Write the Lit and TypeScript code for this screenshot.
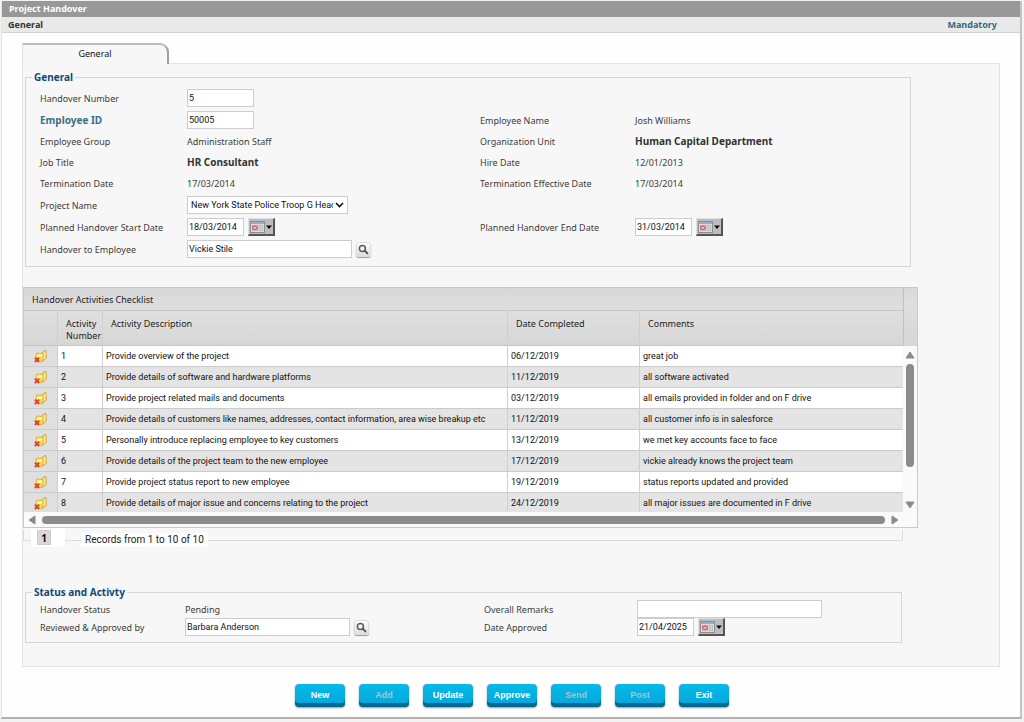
import { LitElement, html, css, svg, nothing } from "lit";
import { customElement, property } from "lit/decorators.js";

interface Activity {
  no: number;
  text: string;
  date: string;
  comment: string;
}

const activities: Activity[] = [
  { no: 1, text: "Provide overview of the project", date: "06/12/2019", comment: "great job" },
  { no: 2, text: "Provide details of software and hardware platforms", date: "11/12/2019", comment: "all software activated" },
  { no: 3, text: "Provide project related mails and documents", date: "03/12/2019", comment: "all emails provided in folder and on F drive" },
  { no: 4, text: "Provide details of customers like names, addresses, contact information, area wise breakup etc", date: "11/12/2019", comment: "all customer info is in salesforce" },
  { no: 5, text: "Personally introduce replacing employee to key customers", date: "13/12/2019", comment: "we met key accounts face to face" },
  { no: 6, text: "Provide details of the project team to the new employee", date: "17/12/2019", comment: "vickie already knows the project team" },
  { no: 7, text: "Provide project status report to new employee", date: "19/12/2019", comment: "status reports updated and provided" },
  { no: 8, text: "Provide details of major issue and concerns relating to the project", date: "24/12/2019", comment: "all major issues are documented in F drive" },
];

const actions = [
  { label: "New", dim: false },
  { label: "Add", dim: true },
  { label: "Update", dim: false },
  { label: "Approve", dim: false },
  { label: "Send", dim: true },
  { label: "Post", dim: true },
  { label: "Exit", dim: false },
];

const dots: number[][] = [];
for (let r = 0; r < 3; r++) for (let c = 0; c < 5; c++) dots.push([3 + c * 2.4, 5 + r * 2.3]);

const calendarIcon = html`<svg width="24" height="14" viewBox="0 0 24 14" aria-hidden="true">
  <rect x="1.5" y="1.5" width="14" height="11" fill="#dcdcdc" stroke="#8d8d8d" stroke-width="1" />
  <rect x="2" y="2" width="13" height="2" fill="#8fb0d0" />
  ${dots.map(([x, y]) => svg`<rect x=${x} y=${y} width="1.4" height="1.3" fill="#a4a7ae" />`)}
  <ellipse cx="6" cy="7.8" rx="2.3" ry="1.7" fill="#f3d0ce" stroke="#e2504c" stroke-width="1.2" />
  <path d="M17 5.5h6L20 9z" fill="#0a0a0a" />
</svg>`;

const lensIcon = html`<svg width="11" height="11" viewBox="0 0 11 11" aria-hidden="true">
  <circle cx="4.4" cy="4.4" r="3" fill="#f5f5f5" stroke="#5c5c5c" stroke-width="1.5" />
  <path d="M6.8 6.8L9.4 9.4" stroke="#555" stroke-width="2" stroke-linecap="round" />
</svg>`;

const folderIcon = html`<svg width="13" height="13" viewBox="0 0 13 13" aria-hidden="true">
  <path d="M7.6 3L8.2 2.4L9.4 2.2L9.8 1L12 .6L12.3 8.2L8 11.4z" fill="#fae98c" stroke="#c48a1c" stroke-width=".7" />
  <path d="M2 4.4L2.6 3.2L4.8 2.8L5.6 3.6L8.6 3L9.4 4.2L8.8 10.6L7.4 11.8L2.6 10z" fill="#f6d84e" stroke="#cf9a26" stroke-width=".6" />
  <path d="M3 4.8L8.2 4.2L8 6.6L3.2 7.2z" fill="#fff7b4" />
  <path d="M.9 7.6L5.1 12M5.1 7.6L.9 12" stroke="#e0402a" stroke-width="2" />
</svg>`;

@customElement("date-field")
class DateField extends LitElement {
  @property() label = "";
  @property() value = "";

  static styles = css`
    :host { display: flex; align-items: center; gap: 4px; }
    .date {
      box-sizing: border-box; width: 57px; height: 18px; margin: 0; padding: 0 1px;
      border: 1px solid #ccc; background: #fff; color: #111;
      font: 9px Roboto, sans-serif; outline: none;
    }
    .pick {
      display: grid; place-items: center; width: 27px; height: 18px; margin: 0; padding: 0; box-sizing: border-box;
      border: 1px solid; border-color: #e0e0e0 #555 #555 #e0e0e0; border-right-width: 2px; border-bottom-width: 2px;
      background: #bdbdbd;
    }
  `;

  render() {
    return html`
      <input class="date" type="text" aria-label=${this.label} .value=${this.value} />
      <button class="pick" type="button" aria-label="Pick date">${calendarIcon}</button>
    `;
  }
}

@customElement("lookup-field")
class LookupField extends LitElement {
  @property() label = "";
  @property() value = "";

  static styles = css`
    :host { display: flex; align-items: center; gap: 4px; }
    .person {
      box-sizing: border-box; width: 165px; height: 18px; margin: 0; padding: 0 1px;
      border: 1px solid #ccc; background: #fff; color: #111;
      font: 9px Roboto, sans-serif; outline: none;
    }
    .find {
      display: grid; place-items: center; box-sizing: border-box; width: 15px; height: 15px; margin: 0; padding: 0;
      border: 1px solid #ddd; border-radius: 3px; box-shadow: 0 1px 1px #999;
      background: linear-gradient(#fff, #ddd);
    }
  `;

  render() {
    return html`
      <input class="person" type="text" aria-label=${this.label} .value=${this.value} />
      <button class="find" type="button" aria-label="Search">${lensIcon}</button>
    `;
  }
}

@customElement("activity-grid")
class ActivityGrid extends LitElement {
  static styles = css`
    :host {
      display: grid; grid-template-columns: minmax(0, 1fr) 14px; grid-template-rows: 58px minmax(0, 1fr) 15px;
      border: 1px solid #c9c9c9; background: #fafafa;
      font: 9px/12px "Noto Sans", sans-serif; color: #111;
    }
    .view { grid-row: 1 / 3; height: 224px; overflow: hidden; }
    .corner { background: linear-gradient(#d9d9d9, #dfdfdf 30%, #d6d6d6); border-left: 1px solid #c0c0c0; }
    table { width: 100%; border-collapse: separate; border-spacing: 0; table-layout: fixed; }
    caption {
      box-sizing: border-box; height: 23px; padding: 0 8px; text-align: left; line-height: 24px;
      background: linear-gradient(#d8d8d8, #dedede); border-bottom: 1px solid #c6c6c6; color: #222;
    }
    th {
      box-sizing: border-box; height: 35px; padding: 7px 0 0 8px; vertical-align: top; text-align: left;
      font-weight: 400; line-height: 12px; color: #222;
      background: linear-gradient(#e0e0e0, #d6d6d6); border-bottom: 1px solid #c6c6c6;
    }
    th + th, td + td { border-left: 1px solid #cfcfcf; }
    td {
      box-sizing: border-box; height: 21px; padding: 0 3px; border-bottom: 1px solid #cbcbcb; background: #fff;
      font-family: Roboto, sans-serif; white-space: nowrap;
    }
    .even td { background: #e4e4e4; }
    .icon, .even .icon { background: #dfdfdf; text-align: center; padding: 0; }
    .icon svg { display: block; margin: 0 auto; }
    .c-icon { width: 33px; }
    .c-no { width: 45px; }
    .c-date { width: 132px; }
    .c-note { width: 264px; }
    .vbar { display: flex; flex-direction: column; align-items: center; padding: 5px 0 3px; gap: 5px; }
    .vtrack { flex: 1; }
    .vthumb { width: 8px; height: 103px; border-radius: 4px; background: #8b8b8b; }
    .hbar { display: flex; align-items: center; gap: 6px; padding: 0 4px; }
    .hthumb { flex: 1; height: 8px; border-radius: 4px; background: #8b8b8b; }
    .arrow { display: block; fill: #8b8b8b; stroke: #8b8b8b; stroke-width: 1; stroke-linejoin: round; }
  `;

  render() {
    return html`
      <div class="view">
        <table>
          <caption>Handover Activities Checklist</caption>
          <colgroup>
            <col class="c-icon" /><col class="c-no" /><col /><col class="c-date" /><col class="c-note" />
          </colgroup>
          <thead>
            <tr>
              <th aria-label="Delete"></th>
              <th scope="col">Activity Number</th>
              <th scope="col">Activity Description</th>
              <th scope="col">Date Completed</th>
              <th scope="col">Comments</th>
            </tr>
          </thead>
          <tbody>
            ${activities.map(
              (a) => html`<tr class=${a.no % 2 ? nothing : "even"}>
                <td class="icon">${folderIcon}</td>
                <td>${a.no}</td>
                <td>${a.text}</td>
                <td>${a.date}</td>
                <td>${a.comment}</td>
              </tr>`
            )}
          </tbody>
        </table>
      </div>
      <div class="corner"></div>
      <div class="vbar">
        <svg class="arrow" width="10" height="8" viewBox="0 0 10 8"><path d="M5 1L9 7H1z" /></svg>
        <div class="vtrack"><div class="vthumb"></div></div>
        <svg class="arrow" width="10" height="8" viewBox="0 0 10 8"><path d="M5 7L9 1H1z" /></svg>
      </div>
      <div class="hbar">
        <svg class="arrow" width="8" height="10" viewBox="0 0 8 10"><path d="M1 5L7 1V9z" /></svg>
        <div class="hthumb"></div>
        <svg class="arrow" width="8" height="10" viewBox="0 0 8 10"><path d="M7 5L1 1V9z" /></svg>
      </div>
    `;
  }
}

@customElement("app-root")
class AppRoot extends LitElement {
  static styles = css`
    :host {
      display: block; box-sizing: border-box; min-height: 100vh; padding: 1px 2px 3px 1px; background: #f3f3f3;
      font: 9px/17px "Noto Sans", sans-serif; color: #3c3c3c;
    }
    .window { background: #fefefe; border-left: 1px solid #e6e6e6; border-right: 2px solid #c4c4c4; border-bottom: 2px solid #b0b0b0; }
    .title { margin: 0; padding: 0 7px; background: #989898; color: #fff; font: bold 9px/16px "Noto Sans", sans-serif; }
    .bar {
      display: flex; justify-content: space-between; padding: 0 23px 0 6px; background: #e9e9e9;
      border-bottom: 1px solid #d2d2d2; font-weight: 700; line-height: 15px; color: #333;
    }
    .mandatory { color: #33687f; }
    .body { padding: 10px 20px 10px; }
    .tabs { display: flex; }
    .tab {
      width: 147px; height: 21px; margin: 0 0 -1px; padding: 0 0 1px; border: 1px solid #ddd; border-top: 2px solid #bbb; border-right: 2px solid #a0a0a0;
      border-bottom: 0; border-radius: 0 9px 0 0; background: #f7f7f7; color: #111; font: 9px/16px "Noto Sans", sans-serif;
    }
    .panel { border: 1px solid #e4e4e4; background: #f7f7f7; padding: 6px 81px 23px 0; }
    fieldset { margin: 0 7px 0 2px; padding: 0 14px; border: 1px solid #d6d6d6; min-width: 0; }
    legend { margin-left: -8px; padding: 0 2px; font-weight: 700; font-size: 10px; line-height: 14px; color: #0d4a78; }
    .form { display: grid; grid-template-columns: 147px 293px 155px minmax(0, 1fr); align-items: center; }
    .general .form { padding: 3px 0 6px; }
    .cell { padding: 2px 0; min-height: 17px; }
    .strong { font-weight: 700; font-size: 10px; color: #333; }
    .key { font-weight: 700; font-size: 10px; color: #3a6f88; }
    .text {
      display: block; box-sizing: border-box; width: 67px; height: 18px; margin: 0; padding: 0 1px; border: 1px solid #ccc;
      background: #fff; color: #111; font: 9px Roboto, sans-serif; outline: none;
    }
    .text.wide { width: 185px; }
    .select { display: grid; width: 161px; }
    .select > * { grid-area: 1 / 1; }
    select {
      appearance: none; box-sizing: border-box; width: 100%; height: 18px; margin: 0; padding: 0 14px 0 3px;
      border: 1px solid #ccc; border-radius: 0; background: #fff; color: #111; font: 9px Roboto, sans-serif;
    }
    .chevron { justify-self: end; align-self: center; margin-right: 4px; pointer-events: none; }
    activity-grid { margin: 20px 0 0; }
    .pager { display: grid; margin-right: 15px; height: 22px; font: 10px "Roboto", sans-serif; color: #222; }
    .pager > * { grid-area: 1 / 1; }
    .rule { height: 10px; margin-top: 2px; border: 1px solid #dcdcdc; border-top: 0; }
    .pages { display: flex; align-items: start; gap: 16px; padding: 0 8px; line-height: 16px; }
    .page { background: #fff; padding: 2px 14px 2px 6px; }
    .current {
      display: block; width: 14px; height: 15px; margin: 0; padding: 0; border: 1px solid #ccc; background: #d9d9d9; color: #111;
      font: bold 10px/12px "Noto Sans", sans-serif;
    }
    .records { background: #fff; padding: 0 4px; margin-top: 5px; line-height: 14px; }
    .status { margin: 35px 16px 0 2px; }
    .status .form { grid-template-columns: 145px 299px 153px minmax(0, 1fr); padding: 1px 0 6px; }
    .status .cell { padding: 0; }
    .actions { display: flex; justify-content: center; gap: 14px; padding: 17px 0 0 2px; }
    .action {
      width: 50px; height: 23px; margin: 0; padding: 0; border: 0; border-radius: 4px; background: linear-gradient(#05b9e8, #05a6da);
      box-shadow: inset 0 -4px #00698e, 0 1px 2px #999; color: #fff; font: bold 9px/19px "Liberation Sans", sans-serif;
    }
    .dim { color: #a9c3cf; }
  `;

  render() {
    return html`
      <div class="window">
        <h1 class="title">Project Handover</h1>
        <div class="bar"><span>General</span><span class="mandatory">Mandatory</span></div>
        <main class="body">
          <div class="tabs" role="tablist"><button class="tab" type="button" role="tab" aria-selected="true">General</button></div>
          <div class="panel">
            <fieldset class="general">
              <legend>General</legend>
              <div class="form">
                <label class="cell" for="number">Handover Number</label>
                <div class="cell"><input class="text" id="number" type="text" value="5" /></div>
                <span></span><span></span>

                <label class="cell key" for="employee">Employee ID</label>
                <div class="cell"><input class="text" id="employee" type="text" value="50005" /></div>
                <span class="cell">Employee Name</span><span class="cell">Josh Williams</span>

                <span class="cell">Employee Group</span><span class="cell">Administration Staff</span>
                <span class="cell">Organization Unit</span><span class="cell strong">Human Capital Department</span>

                <span class="cell">Job Title</span><span class="cell strong">HR Consultant</span>
                <span class="cell">Hire Date</span><span class="cell">12/01/2013</span>

                <span class="cell">Termination Date</span><span class="cell">17/03/2014</span>
                <span class="cell">Termination Effective Date</span><span class="cell">17/03/2014</span>

                <label class="cell" for="project">Project Name</label>
                <div class="cell">
                  <div class="select">
                    <select id="project"><option>New York State Police Troop G Headquarters</option></select>
                    <svg class="chevron" width="9" height="6" viewBox="0 0 9 6" aria-hidden="true">
                      <path d="M1 1l3.5 3.5L8 1" fill="none" stroke="#111" stroke-width="1.6" />
                    </svg>
                  </div>
                </div>
                <span></span><span></span>

                <span class="cell">Planned Handover Start Date</span>
                <date-field class="cell" label="Planned Handover Start Date" value="18/03/2014"></date-field>
                <span class="cell">Planned Handover End Date</span>
                <date-field class="cell" label="Planned Handover End Date" value="31/03/2014"></date-field>

                <span class="cell">Handover to Employee</span>
                <lookup-field class="cell" label="Handover to Employee" value="Vickie Stile"></lookup-field>
                <span></span><span></span>
              </div>
            </fieldset>

            <activity-grid></activity-grid>
            <div class="pager">
              <div class="rule"></div>
              <div class="pages">
                <span class="page"><button class="current" type="button">1</button></span>
                <span class="records">Records from 1 to 10 of 10</span>
              </div>
            </div>

            <fieldset class="status">
              <legend>Status and Activty</legend>
              <div class="form">
                <span class="cell">Handover Status</span><span class="cell">Pending</span>
                <label class="cell" for="remarks">Overall Remarks</label>
                <div class="cell"><input class="text wide" id="remarks" type="text" /></div>

                <span class="cell">Reviewed &amp; Approved by</span>
                <lookup-field class="cell" label="Reviewed &amp; Approved by" value="Barbara Anderson"></lookup-field>
                <span class="cell">Date Approved</span>
                <date-field class="cell" label="Date Approved" value="21/04/2025"></date-field>
              </div>
            </fieldset>
          </div>
          <div class="actions">
            ${actions.map((a) => html`<button class="action ${a.dim ? "dim" : ""}" type="button">${a.label}</button>`)}
          </div>
        </main>
      </div>
    `;
  }
}
